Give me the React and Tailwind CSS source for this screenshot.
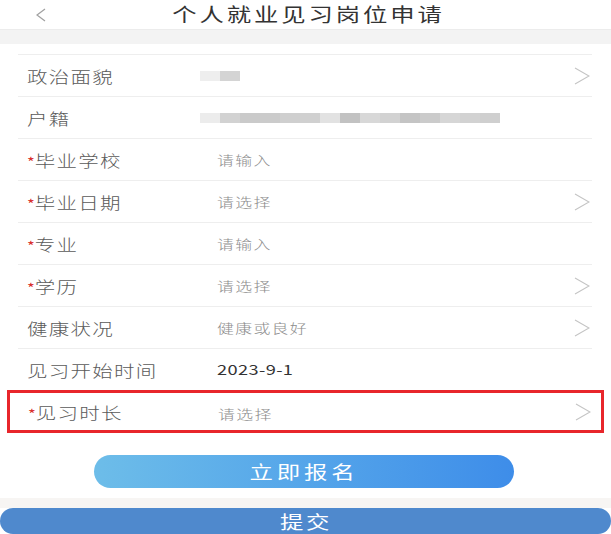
import React from 'react';

const font = { fontFamily: '"Noto Sans CJK SC", "Noto Sans", sans-serif' };

const rows = [
  { label: '政治面貌', blur: 'short', arrow: true },
  { label: '户籍', blur: 'long' },
  { label: '毕业学校', value: '请输入', required: true },
  { label: '毕业日期', value: '请选择', required: true, arrow: true },
  { label: '专业', value: '请输入', required: true },
  { label: '学历', value: '请选择', required: true, arrow: true },
  { label: '健康状况', value: '健康或良好', arrow: true },
  { label: '见习开始时间', value: '2023-9-1', dark: true },
];

const shortBlur = ['#eeeeee', '#d4d4d4'];
const longBlur = [
  '#ececec', '#d2d2d2', '#cacaca', '#cbcbcb', '#cfcfcf', '#d0d0d0', '#e2e2e2',
  '#c2c2c2', '#d8d8d8', '#d2d2d2', '#c4c4c4', '#cbcbcb', '#d6d6d6', '#d2d2d2', '#cfcfcf',
];

function Chevron() {
  return (
    <svg width="16" height="18" viewBox="0 0 16 18" className="shrink-0">
      <polyline points="1,1 15,9 1,17" fill="none" stroke="#c4c4c4" strokeWidth="1.1" />
    </svg>
  );
}

function Blur({ blocks }) {
  return (
    <div className="flex h-[10px] -ml-[17px]">
      {blocks.map((c, i) => (
        <div key={i} className="w-[20px] h-full" style={{ backgroundColor: c }} />
      ))}
    </div>
  );
}

function Label({ text, required }) {
  return (
    <div className="w-[190px] text-[16px] font-light text-[#5a5a5a] whitespace-nowrap">
      <span className="inline-block origin-left scale-x-[1.28] tracking-[1px]">
        {required && <span className="text-[#d9302c] text-[13px] font-normal tracking-normal">*</span>}
        {text}
      </span>
    </div>
  );
}

function Row({ row }) {
  return (
    <div className="flex items-center h-[42px] pl-[9px] pr-[2px] border-b border-[#eeeeee]">
      <Label text={row.label} required={row.required} />
      <div className="flex-1 flex items-center">
        {row.blur === 'short' && <Blur blocks={shortBlur} />}
        {row.blur === 'long' && <Blur blocks={longBlur} />}
        {row.value && (
          <span
            className={
              row.dark
                ? 'inline-block origin-left scale-x-[1.3] text-[14px] text-[#333333] tracking-[0.3px]'
                : 'inline-block origin-left scale-x-[1.3] text-[13px] font-light text-[#8c8c8c] tracking-[1px]'
            }
          >
            {row.value}
          </span>
        )}
      </div>
      {row.arrow && <Chevron />}
    </div>
  );
}

export default function App() {
  return (
    <div className="w-[611px] h-[534px] bg-white overflow-hidden flex flex-col" style={font}>
      {/* Header */}
      <div className="h-[29px] flex items-center shrink-0">
        <svg width="10" height="14" viewBox="0 0 10 14" className="ml-[36px]">
          <polyline points="9,1 1,7 9,13" fill="none" stroke="#a0a0a0" strokeWidth="1.2" />
        </svg>
        <div className="flex-1 text-center pr-[40px]">
          <span className="inline-block scale-x-[1.28] text-[19px] text-[#333333] tracking-[2.3px]">
            个人就业见习岗位申请
          </span>
        </div>
      </div>
      <div className="h-[15px] bg-[#f3f3f3] border-t border-[#ececec] shrink-0" />

      {/* Form */}
      <div className="pt-[10px] pl-[18px] pr-[19px]">
        <div className="border-t border-[#eeeeee]">
          {rows.map((r, i) => (
            <Row key={i} row={r} />
          ))}
        </div>
      </div>

      {/* Highlighted row */}
      <div className="mx-[7px] -mt-[1px] border-[3px] border-[#e8262b] pl-[11px] pr-[10px]">
        <div className="flex items-center h-[37px] pl-[7px]">
          <Label text="见习时长" required />
          <div className="flex-1">
            <span className="inline-block origin-left scale-x-[1.3] text-[13px] font-light text-[#8c8c8c] tracking-[1px]">
              请选择
            </span>
          </div>
          <Chevron />
        </div>
      </div>

      {/* Apply button */}
      <div className="flex justify-center pt-[22px] pr-[4px]">
        <button className="w-[420px] h-[33px] rounded-full bg-gradient-to-r from-[#6dbde9] to-[#3e8de9] text-white">
          <span className="inline-block scale-x-[1.3] text-[18px] tracking-[3px]">立即报名</span>
        </button>
      </div>

      <div className="h-[10px] mt-[10px] bg-[#f7f5f3]" />
      <div className="h-[26px] bg-[#4f89cd] rounded-[13px] flex items-center justify-center text-white">
        <span className="inline-block scale-x-[1.3] text-[18px] tracking-[2px]">提交</span>
      </div>
    </div>
  );
}
